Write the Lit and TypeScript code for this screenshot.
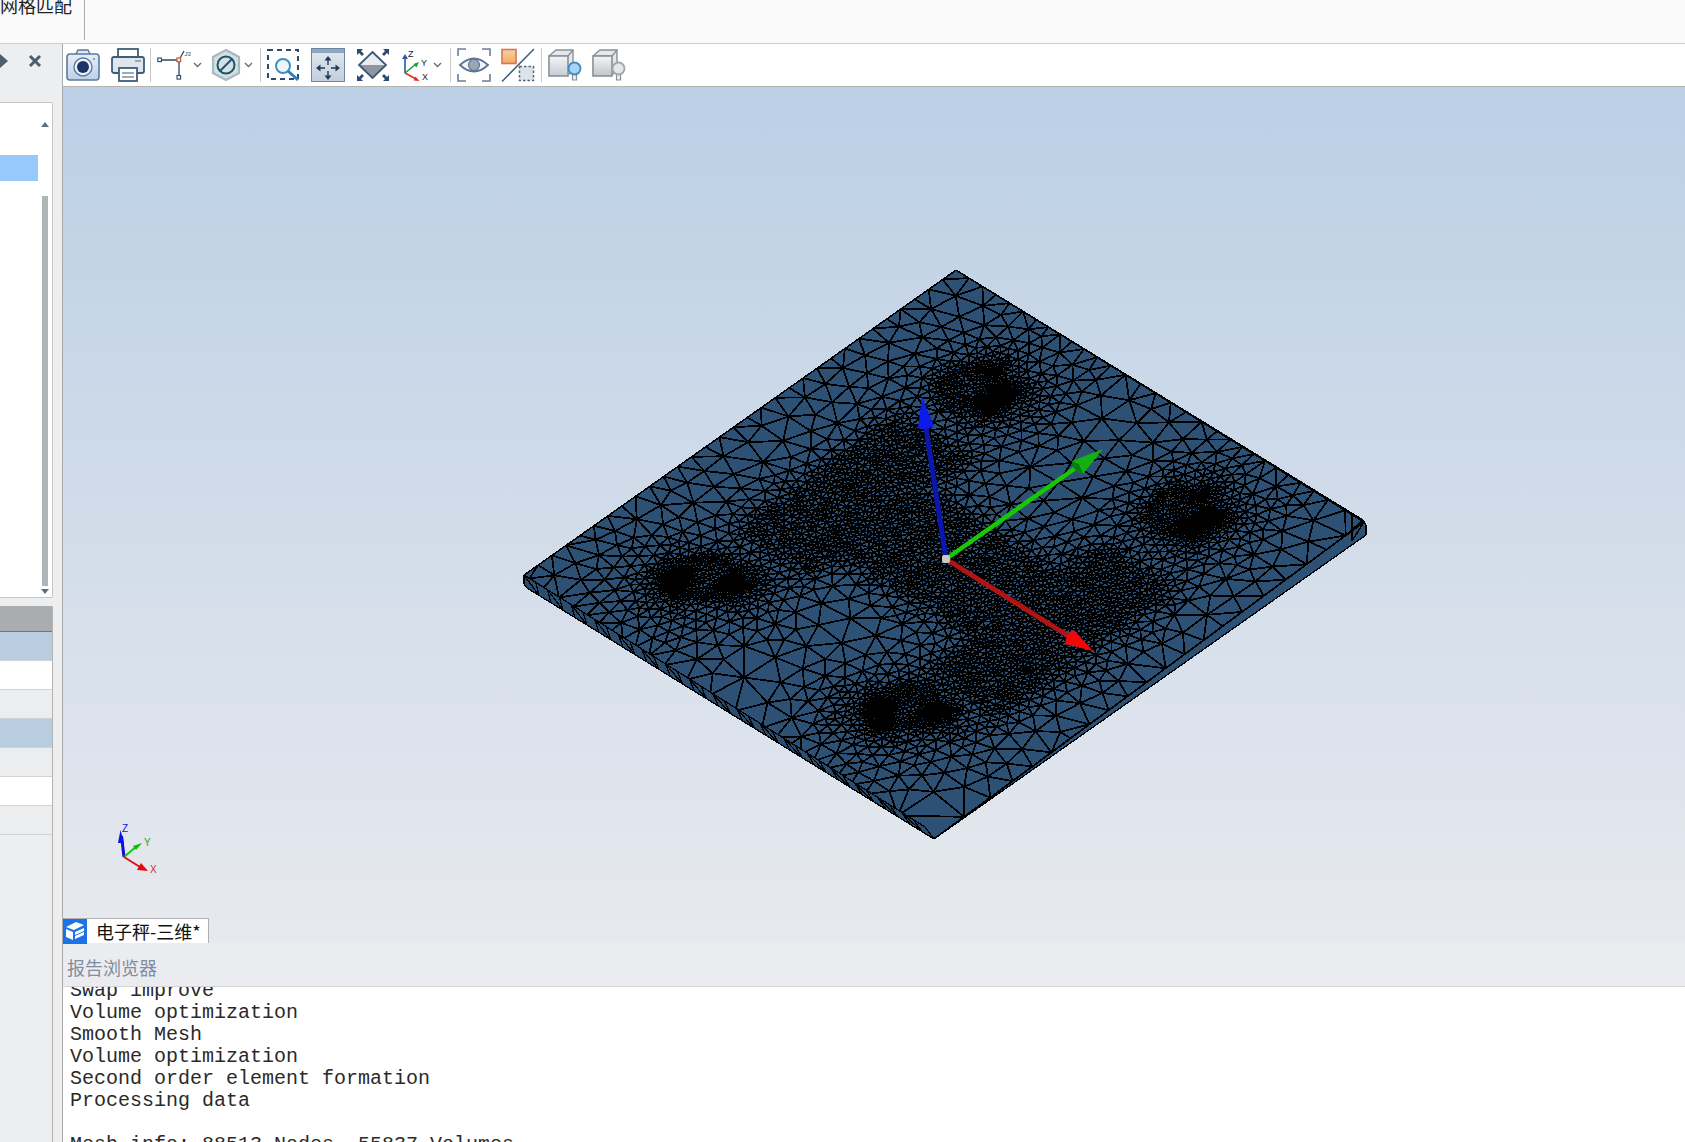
import { LitElement, html, css, svg } from "lit";
import { customElement } from "lit/decorators.js";

type Pt = [number, number];

// plate corners in page pixels (T top, R right, F front, L left)
const T: Pt = [956, 270];
const R: Pt = [1364, 522];
const F: Pt = [934, 839];
const L: Pt = [524, 575];
const SIZE = 500;

let seed = 20240611;
const rnd = () => {
  seed = (seed * 1664525 + 1013904223) >>> 0;
  return seed / 4294967296;
};

const toScreen = (x: number, y: number): Pt => {
  const u = x / SIZE;
  const v = y / SIZE;
  return [
    (1 - u) * (1 - v) * T[0] + u * (1 - v) * R[0] + u * v * F[0] + (1 - u) * v * L[0],
    (1 - u) * (1 - v) * T[1] + u * (1 - v) * R[1] + u * v * F[1] + (1 - u) * v * L[1],
  ];
};

// four mounting bosses: ring centre plus the darkest spots [u, v, radius px]
const bosses = [
  { c: [0.237, 0.185], spots: [[0.287, 0.195, 9], [0.29, 0.165, 8], [0.237, 0.138, 3]] },
  { c: [0.735, 0.178], spots: [[0.782, 0.19, 9], [0.785, 0.158, 8], [0.735, 0.13, 3]] },
  { c: [0.235, 0.806], spots: [[0.2, 0.835, 9], [0.285, 0.785, 9], [0.225, 0.855, 5]] },
  { c: [0.732, 0.803], spots: [[0.7, 0.84, 9], [0.778, 0.785, 9], [0.725, 0.858, 5]] },
].map((b) => ({
  c: [b.c[0] * SIZE, b.c[1] * SIZE],
  spots: b.spots.map((s) => [s[0] * SIZE, s[1] * SIZE, s[2]]),
}));

// fine mesh follows an H: two legs and a crossbar
const bars = [
  [0.2, 0.36, 0.32, 0.68],
  [0.7, 0.86, 0.32, 0.72],
  [0.26, 0.84, 0.42, 0.61],
].map((b) => b.map((n) => n * SIZE));

const sizeAt = (x: number, y: number) => {
  const u = x / SIZE;
  const v = y / SIZE;
  let h = 19 + 33 * u * v + 6 * Math.max(0, u - v);
  for (const b of bars) {
    const dx = Math.max(b[0] - x, 0, x - b[1]);
    const dy = Math.max(b[2] - y, 0, y - b[3]);
    h = Math.min(h, 5 + 0.3 * Math.hypot(dx, dy));
  }
  for (const b of bosses) {
    const d = Math.hypot(x - b.c[0], y - b.c[1]);
    if (d > 120) continue;
    const ring = d < 26 ? 3.7 + 0.05 * (26 - d) : 3.7 + 0.3 * (d - 26);
    h = Math.min(h, ring);
    for (const s of b.spots) {
      const ds = Math.hypot(x - s[0], y - s[1]);
      h = Math.min(h, 2.3 + 0.22 * Math.max(0, ds - s[2]));
    }
  }
  return h;
};

const buildPoints = (): Pt[] => {
  const pts: Pt[] = [];
  const cell = 8;
  const grid = new Map<number, Pt[]>();
  const key = (cx: number, cy: number) => (cx + 10) * 1000 + cy + 10;
  const add = (p: Pt) => {
    pts.push(p);
    const k = key(Math.floor(p[0] / cell), Math.floor(p[1] / cell));
    const list = grid.get(k);
    if (list) list.push(p);
    else grid.set(k, [p]);
  };
  const free = (x: number, y: number, r: number) => {
    const cr = Math.ceil(r / cell);
    const cx = Math.floor(x / cell);
    const cy = Math.floor(y / cell);
    for (let i = cx - cr; i <= cx + cr; i++) {
      for (let j = cy - cr; j <= cy + cr; j++) {
        const list = grid.get(key(i, j));
        if (!list) continue;
        for (const p of list) {
          if ((p[0] - x) ** 2 + (p[1] - y) ** 2 < r * r) return false;
        }
      }
    }
    return true;
  };

  // border first, so the outline stays straight
  const walk = (fn: (t: number) => Pt) => {
    let t = 0;
    while (t < SIZE) {
      const p = fn(t);
      add(p);
      t += sizeAt(p[0], p[1]) * 0.85;
    }
  };
  walk((t) => [t, 0]);
  walk((t) => [SIZE, t]);
  walk((t) => [SIZE - t, SIZE]);
  walk((t) => [0, SIZE - t]);

  const tryAt = (x: number, y: number) => {
    if (x < 3 || y < 3 || x > SIZE - 3 || y > SIZE - 3) return;
    const h = sizeAt(x, y);
    if (free(x, y, h * 0.88)) add([x, y]);
  };
  for (let i = 0; i < 70000; i++) tryAt(rnd() * SIZE, rnd() * SIZE);
  for (const b of bosses) {
    for (let i = 0; i < 26000; i++) {
      tryAt(b.c[0] + (rnd() - 0.5) * 120, b.c[1] + (rnd() - 0.5) * 120);
    }
  }
  for (let i = 0; i < 120000; i++) tryAt(rnd() * SIZE, rnd() * SIZE);
  return pts;
};

// sweep version of Bowyer-Watson, returns triangle index triples
const delaunay = (pts: Pt[]): number[][] => {
  const n = pts.length;
  const all: Pt[] = pts.map((p) => [p[0] + rnd() * 1e-3, p[1] + rnd() * 1e-3]);
  all.push([-5000, -5000], [SIZE / 2, 12000], [6000, -5000]);
  const order = pts.map((_, i) => i).sort((a, b) => all[a][0] - all[b][0]);
  const circ = (a: number, b: number, c: number) => {
    const [ax, ay] = all[a];
    const [bx, by] = all[b];
    const [cx, cy] = all[c];
    const d = 2 * (ax * (by - cy) + bx * (cy - ay) + cx * (ay - by));
    const aa = ax * ax + ay * ay;
    const bb = bx * bx + by * by;
    const cc = cx * cx + cy * cy;
    const x = (aa * (by - cy) + bb * (cy - ay) + cc * (ay - by)) / d;
    const y = (aa * (cx - bx) + bb * (ax - cx) + cc * (bx - ax)) / d;
    return { a, b, c, x, y, r: (ax - x) ** 2 + (ay - y) ** 2 };
  };
  let open = [circ(n, n + 1, n + 2)];
  const closed: (typeof open)[0][] = [];
  for (const i of order) {
    const [px, py] = all[i];
    const edges = new Map<string, [number, number]>();
    const toggle = (a: number, b: number) => {
      const k = a < b ? `${a}_${b}` : `${b}_${a}`;
      if (edges.has(k)) edges.delete(k);
      else edges.set(k, [a, b]);
    };
    const next: typeof open = [];
    for (const t of open) {
      const dx = px - t.x;
      if (dx > 0 && dx * dx > t.r) {
        closed.push(t);
        continue;
      }
      if (dx * dx + (py - t.y) ** 2 > t.r) {
        next.push(t);
        continue;
      }
      toggle(t.a, t.b);
      toggle(t.b, t.c);
      toggle(t.c, t.a);
    }
    for (const [a, b] of edges.values()) next.push(circ(a, b, i));
    open = next;
  }
  return closed
    .concat(open)
    .filter((t) => t.a < n && t.b < n && t.c < n)
    .map((t) => [t.a, t.b, t.c]);
};

const edgesOf = (tris: number[][]) => {
  const seen = new Set<number>();
  const out: [number, number][] = [];
  for (const t of tris) {
    for (let i = 0; i < 3; i++) {
      const a = Math.min(t[i], t[(i + 1) % 3]);
      const b = Math.max(t[i], t[(i + 1) % 3]);
      const k = a * 100000 + b;
      if (!seen.has(k)) {
        seen.add(k);
        out.push([a, b]);
      }
    }
  }
  return out;
};

const buildMesh = () => {
  const pts = buildPoints();
  let edges = edgesOf(delaunay(pts));
  // a little smoothing makes the triangles look like a mesher's
  for (let pass = 0; pass < 3; pass++) {
    const sum = pts.map(() => [0, 0, 0]);
    for (const [a, b] of edges) {
      sum[a][0] += pts[b][0];
      sum[a][1] += pts[b][1];
      sum[a][2]++;
      sum[b][0] += pts[a][0];
      sum[b][1] += pts[a][1];
      sum[b][2]++;
    }
    pts.forEach((p, i) => {
      if (p[0] <= 0 || p[1] <= 0 || p[0] >= SIZE || p[1] >= SIZE) return;
      p[0] += (sum[i][0] / sum[i][2] - p[0]) * 0.6;
      p[1] += (sum[i][1] / sum[i][2] - p[1]) * 0.6;
    });
    edges = edgesOf(delaunay(pts));
  }
  const scr = pts.map((p) => toScreen(p[0], p[1]));
  const f = (n: number) => n.toFixed(1);
  return edges
    .map(([a, b]) => `M${f(scr[a][0])} ${f(scr[a][1])}L${f(scr[b][0])} ${f(scr[b][1])}`)
    .join("");
};

// side wall along the L-F edge, plain quads with one diagonal
const buildWall = () => {
  const topA: Pt = [524, 575];
  const topB: Pt = [925, 827];
  const botA: Pt = [527, 588];
  const botB: Pt = [934, 839];
  const count = 34;
  let d = `M${topA}L${topB}`;
  let prev: Pt = topA;
  for (let i = 1; i <= count; i++) {
    const t = i / count;
    const a: Pt = [topA[0] + (topB[0] - topA[0]) * t, topA[1] + (topB[1] - topA[1]) * t];
    const b: Pt = [botA[0] + (botB[0] - botA[0]) * t, botA[1] + (botB[1] - botA[1]) * t];
    d += `M${a[0].toFixed(1)} ${a[1].toFixed(1)}L${b[0].toFixed(1)} ${b[1].toFixed(1)}`;
    if (i % 2) d += `M${prev[0].toFixed(1)} ${prev[1].toFixed(1)}L${b[0].toFixed(1)} ${b[1].toFixed(1)}`;
    prev = a;
  }
  return d;
};

const meshPath = buildMesh();
const wallPath = buildWall();

const chevron = html`<svg class="chev" width="9" height="34" viewBox="0 0 9 34">
  <path d="M1 15l3.5 3.5L8 15" fill="none" stroke="#5f6f7f" stroke-width="1.4" />
</svg>`;

const cube = (id: string, face: string, edge: string, bulb: string, bulbEdge: string) => svg`
  <defs>
    <linearGradient id=${id} x1="0" y1="0" x2="0" y2="1">
      <stop offset="0" stop-color="#f4f5f7" />
      <stop offset="1" stop-color=${face} />
    </linearGradient>
  </defs>
  <path d="M1 8l7-6h17v20l-5 5" fill="#e4e7eb" stroke=${edge} stroke-width="1.4" />
  <path d="M1 8h19l5-6" fill="none" stroke=${edge} stroke-width="1.4" />
  <rect x="1" y="8" width="19" height="20" fill="url(#${id})" stroke=${edge} stroke-width="1.6" />
  <path d="M24.5 26h4v6h-4z" fill="#f0f0f0" stroke="#8b8f94" stroke-width="1.2" />
  <circle cx="26.5" cy="20.5" r="6" fill=${bulb} stroke=${bulbEdge} stroke-width="1.8" />
`;

@customElement("app-root")
export class AppRoot extends LitElement {
  static styles = css`
    :host {
      display: block;
      width: 1685px;
      height: 1142px;
      overflow: hidden;
      font-family: "Noto Sans CJK SC", "Liberation Sans", sans-serif;
      background: #eceef0;
    }
    .top {
      height: 43px;
      background: #fafafa;
      border-bottom: 1px solid #cfcfcf;
      overflow: hidden;
    }
    .top-tab {
      width: 84px;
      height: 40px;
      border-right: 1px solid #a9a9a9;
      font-size: 18px;
      line-height: 24px;
      color: #222;
      overflow: hidden;
    }
    .top-tab span {
      display: block;
      margin-top: -7px;
    }
    .body {
      display: flex;
      height: 1098px;
    }
    .left {
      width: 63px;
      flex: none;
      box-sizing: border-box;
      border-right: 1px solid #a8a8a8;
      display: flex;
      flex-direction: column;
    }
    .left-head {
      height: 42px;
      flex: none;
    }
    .list {
      width: 53px;
      height: 496px;
      margin-top: 16px;
      box-sizing: border-box;
      flex: none;
      background: #fff;
      border: 1px solid #c6c6c6;
      border-left: none;
      border-radius: 0 2px 2px 0;
      display: flex;
    }
    .list-rows {
      width: 38px;
      padding-top: 52px;
      flex: none;
    }
    .sel {
      height: 26px;
      background: #98c9fd;
    }
    .scroll {
      margin-left: 3px;
      width: 8px;
      display: flex;
      flex-direction: column;
      align-items: center;
    }
    .up {
      margin-top: 19px;
      width: 0;
      height: 0;
      border-left: 4px solid transparent;
      border-right: 4px solid transparent;
      border-bottom: 5px solid #5a7080;
    }
    .thumb {
      margin-top: 69px;
      width: 6px;
      height: 390px;
      background: #b0b5b8;
    }
    .down {
      margin-top: 3px;
      width: 0;
      height: 0;
      border-left: 4px solid transparent;
      border-right: 4px solid transparent;
      border-top: 5px solid #5a7080;
    }
    .table {
      margin-top: 8px;
      width: 53px;
      flex: 1;
      box-sizing: border-box;
      border-right: 1px solid #b4b4b4;
    }
    .thead {
      height: 25px;
      background: #a9adb0;
      border-bottom: 1px solid #70757a;
    }
    .row {
      height: 28px;
      border-bottom: 1px solid #d2d2d2;
    }
    .row.blue {
      background: #b9cde0;
    }
    .row.white {
      background: #fff;
    }
    .row.grey {
      background: #ecedef;
    }
    .main {
      flex: 1;
      min-width: 0;
      display: flex;
      flex-direction: column;
    }
    .bar {
      height: 42px;
      flex: none;
      background: #fff;
      border-bottom: 1px solid #b4b4b4;
      display: flex;
      align-items: center;
      padding-left: 3px;
    }
    .bar svg {
      flex: none;
      display: block;
      overflow: visible;
    }
    .sep {
      width: 1px;
      height: 34px;
      background: #c8c8c8;
      flex: none;
    }
    .m2 { margin-left: 2px; }
    .m4 { margin-left: 4px; }
    .m5 { margin-left: 5px; }
    .m6 { margin-left: 6px; }
    .m7 { margin-left: 7px; }
    .m8 { margin-left: 8px; }
    .m10 { margin-left: 10px; }
    .m11 { margin-left: 11px; }
    .view {
      height: 856px;
      flex: none;
      position: relative;
      background: linear-gradient(#bbcfe5, #e7e9ee);
      display: flex;
      flex-direction: column;
      justify-content: flex-end;
      align-items: flex-start;
    }
    .scene {
      position: absolute;
      left: 0;
      top: 0;
    }
    .tab {
      position: relative;
      height: 24px;
      display: flex;
      align-items: center;
      background: #fff;
      border: 1px solid #b0b0b0;
      border-left: none;
      border-bottom: none;
      font-size: 18px;
      color: #111;
      padding-right: 7px;
    }
    .tab-icon {
      display: block;
      width: 24px;
      height: 25px;
      margin-right: 9px;
    }
    .report {
      height: 43px;
      flex: none;
      box-sizing: border-box;
      background: #ebecef;
      padding: 12px 0 0 4px;
      font-size: 18px;
      line-height: 24px;
      color: #7f8da0;
    }
    .console {
      height: 156px;
      flex: none;
      box-sizing: border-box;
      overflow: hidden;
      background: #fff;
      border-top: 1px solid #d4d4d4;
      border-radius: 2px 0 0 0;
      padding-left: 7px;
      font-family: "Liberation Mono", "Courier New", monospace;
      font-size: 20px;
      line-height: 22px;
      color: #2a2a2a;
      white-space: pre;
    }
    .console div {
      margin-top: -7px;
    }
  `;

  private scene() {
    return html`<svg class="scene" width="1622" height="856" viewBox="63 87 1622 856">
      <defs>
        <clipPath id="outline">
          <path d="M956 270L1363 520L1366 525L1366 535L934 839L527 588L524 584L524 575Z" />
        </clipPath>
      </defs>
      <path d="M956 270L1363 520L1366 525L1366 535L934 839L527 588L524 584L524 575Z" fill="#2c5175" />
      <g clip-path="url(#outline)" fill="none" stroke="#000" shape-rendering="crispEdges">
        <path d=${meshPath} stroke-width="1.8" />
        <path d="M1364 522L1352 541M1352 513L1352 541" stroke-width="1.5" />
      </g>
      <path d="M524 575L925 827L934 839L527 588L524 584Z" fill="#2a4c6e" />
      <path d=${wallPath} fill="none" stroke="#000" stroke-width="1.3" shape-rendering="crispEdges" />
      <path d="M956 270L1363 520L1366 525L1366 535L934 839L527 588L524 584L524 575Z" fill="none" stroke="#000" stroke-width="1.3" shape-rendering="crispEdges" />

      <path d="M946 559L926 428" stroke="#0b16ad" stroke-width="5" />
      <path d="M922 397L934 426Q926 431 918 428Z" fill="#0a1bea" />
      <path d="M946 559L1077 467" stroke="#18c800" stroke-width="4.5" />
      <path d="M1103 449L1083 474Q1072 471 1072 461Z" fill="#12b010" />
      <path d="M1083 474Q1072 471 1072 461L1079 464Z" fill="#0a7d12" />
      <path d="M946 559L1070 637" stroke="#b01414" stroke-width="5" />
      <path d="M1093 651L1065 644Q1066 632 1074 630Z" fill="#f00808" />
      <rect x="942" y="555" width="8" height="8" rx="2" fill="#c8c8c8" />

      <path d="M124 857L121.5 836" stroke="#0a10d8" stroke-width="3" />
      <path d="M120.5 830L124 843L118 843Z" fill="#0a10e8" />
      <path d="M124 857L137 846" stroke="#10c810" stroke-width="2" />
      <path d="M142 843L136 850L133 846Z" fill="#0cb80c" />
      <path d="M124 857L140 867" stroke="#e01010" stroke-width="2" />
      <path d="M148 871L137 870L141 863Z" fill="#e80808" />
      <text x="122" y="832" font-family="Liberation Sans" font-size="10" fill="#1414e0">Z</text>
      <text x="144" y="846" font-family="Liberation Sans" font-size="10" fill="#28a828">Y</text>
      <text x="150" y="873" font-family="Liberation Sans" font-size="10" fill="#c83030">X</text>
    </svg>`;
  }

  private toolbar() {
    return html`<div class="bar">
      <svg width="34" height="34" viewBox="0 0 34 34">
        <defs>
          <linearGradient id="cam" x1="0" y1="0" x2="0" y2="1">
            <stop offset="0" stop-color="#e6eef8" />
            <stop offset="1" stop-color="#bcd0e8" />
          </linearGradient>
        </defs>
        <path d="M10 6l2-4h10l2 4" fill="#dfe8f2" stroke="#5b7a9d" stroke-width="1.5" />
        <rect x="1" y="6" width="32" height="26" rx="3" fill="url(#cam)" stroke="#5b7a9d" stroke-width="1.6" />
        <circle cx="17" cy="19" r="9" fill="#eef3f9" stroke="#5b7a9d" stroke-width="1.4" />
        <circle cx="17" cy="19" r="6" fill="#1c3566" />
        <circle cx="28" cy="11" r="1" fill="#6d88a6" />
      </svg>
      <svg class="m11" width="34" height="34" viewBox="0 0 34 34">
        <rect x="7" y="1" width="20" height="10" fill="#fff" stroke="#3f5c7a" stroke-width="1.8" />
        <rect x="1" y="9" width="32" height="16" rx="2" fill="#dfe5ec" stroke="#3f5c7a" stroke-width="1.8" />
        <rect x="8" y="20" width="18" height="13" fill="#fff" stroke="#3f5c7a" stroke-width="1.8" />
        <path d="M11 25h12M11 29h12" stroke="#7a8ea3" stroke-width="1.4" />
        <path d="M24 13h6" stroke="#8b99a8" stroke-width="1.6" />
      </svg>
      <div class="sep m5"></div>
      <svg class="m6" width="34" height="34" viewBox="0 0 34 34">
        <path d="M4 12H22V28M22 12L27 3" fill="none" stroke="#2c4a66" stroke-width="1.3" />
        <rect x="0.8" y="10" width="3.6" height="3.6" fill="#fff" stroke="#2c4a66" stroke-width="1.1" />
        <rect x="20" y="10" width="3.6" height="3.6" fill="#fff" stroke="#c9602a" stroke-width="1.3" />
        <rect x="20" y="27.5" width="3.6" height="3.6" fill="#fff" stroke="#2c4a66" stroke-width="1.1" />
        <text x="27.5" y="8" font-family="Liberation Sans" font-size="6" fill="#2c4a66">J3</text>
      </svg>
      <div class="m2">${chevron}</div>
      <svg class="m10" width="28" height="34" viewBox="0 0 28 34">
        <polygon points="14,2 27,9 27,25 14,32 1,25 1,9" fill="#d6e0e4" stroke="#a7bac2" stroke-width="2.2" />
        <circle cx="14" cy="17" r="8.5" fill="none" stroke="#17566b" stroke-width="2" />
        <path d="M8 23L20 11" stroke="#17566b" stroke-width="2" />
      </svg>
      <div class="m4">${chevron}</div>
      <div class="sep m7"></div>
      <svg class="m6" width="33" height="34" viewBox="0 0 33 34">
        <rect x="1" y="2" width="30" height="29" fill="none" stroke="#2e4a6e" stroke-width="2" stroke-dasharray="5 4" />
        <circle cx="16" cy="18" r="7" fill="#eef5fb" stroke="#3f8fc6" stroke-width="2" />
        <path d="M21 23L31 32" stroke="#2f7fb8" stroke-width="3" />
      </svg>
      <svg class="m11" width="34" height="34" viewBox="0 0 34 34">
        <defs>
          <linearGradient id="pan" x1="0" y1="0" x2="0" y2="1">
            <stop offset="0" stop-color="#e2e8ef" />
            <stop offset="1" stop-color="#c3cedb" />
          </linearGradient>
        </defs>
        <rect x="0.5" y="0.5" width="33" height="33" fill="url(#pan)" stroke="#6a87a5" />
        <rect x="1" y="1" width="32" height="4" fill="#8ea8c2" />
        <path d="M17 12V28M9 20H25" stroke="#1f3a5f" stroke-width="1.4" stroke-dasharray="5 6 5" />
        <path d="M17 8l3.5 4.5h-7zM17 32l3.5-4.5h-7zM5 20l4.5-3.5v7zM29 20l-4.5-3.5v7z" fill="#1f3a5f" />
      </svg>
      <svg class="m11" width="34" height="34" viewBox="0 0 34 34">
        <polygon points="16.5,4 30,17 3,17" fill="#e9ecf0" />
        <polygon points="3,17 30,17 16.5,30" fill="#8f96a0" />
        <polygon points="16.5,4 30,17 16.5,30 3,17" fill="none" stroke="#3e5874" stroke-width="1.8" />
        <path d="M1 1h6l-2 2 3 3-2 2-3-3-2 2zM33 1v6l-2-2-3 3-2-2 3-3-2-2zM1 33v-6l2 2 3-3 2 2-3 3 2 2zM33 33h-6l2-2-3-3 2-2 3 3 2-2z" fill="#2d4c70" />
      </svg>
      <svg class="m11" width="30" height="34" viewBox="0 0 30 34">
        <path d="M4 25V10" stroke="#2b55b0" stroke-width="1.6" />
        <path d="M4 6l3 5H1z" fill="#2b55b0" />
        <path d="M4 25L15 16" stroke="#1e9a4a" stroke-width="1.6" />
        <path d="M18 14l-2.5 5.5-3-3.5z" fill="#1e9a4a" />
        <path d="M4 25L15 31" stroke="#e0302a" stroke-width="1.6" />
        <path d="M18.5 33l-6-.5 2-4z" fill="#e0302a" />
        <text x="7" y="9" font-family="Liberation Sans" font-size="9" fill="#222">Z</text>
        <text x="20" y="18" font-family="Liberation Sans" font-size="9" fill="#222">Y</text>
        <text x="21" y="32" font-family="Liberation Sans" font-size="9" fill="#222">X</text>
      </svg>
      <div class="m2">${chevron}</div>
      <div class="sep m8"></div>
      <svg class="m6" width="34" height="34" viewBox="0 0 34 34">
        <path d="M1 8V1h8M25 1h8v7M33 26v7h-8M9 33H1v-7" fill="none" stroke="#6a7f99" stroke-width="1.6" />
        <path d="M3 17Q17 4 31 17Q17 30 3 17Z" fill="#f4f6f8" stroke="#5c7391" stroke-width="1.8" />
        <circle cx="17" cy="17" r="5.5" fill="#9aa6b4" stroke="#5c7391" stroke-width="1.2" />
      </svg>
      <svg class="m10" width="34" height="34" viewBox="0 0 34 34">
        <defs>
          <linearGradient id="clip" x1="0" y1="0" x2="0" y2="1">
            <stop offset="0" stop-color="#f8d0a4" />
            <stop offset="1" stop-color="#f2a868" />
          </linearGradient>
        </defs>
        <rect x="1" y="1.5" width="14" height="14" fill="url(#clip)" stroke="#cf7b52" stroke-width="1.6" />
        <path d="M1 33.5L33 1" stroke="#3e5d80" stroke-width="1.5" />
        <rect x="18.5" y="18.5" width="14" height="14" fill="#dde3ea" stroke="#52657d" stroke-width="1.5" stroke-dasharray="2.5 2" />
      </svg>
      <div class="sep m6"></div>
      <svg class="m6" width="34" height="34" viewBox="0 0 34 34">
        ${cube("cubeA", "#c6ccd4", "#8a9198", "#a8d4f4", "#3f8bc2")}
      </svg>
      <svg class="m10" width="34" height="34" viewBox="0 0 34 34">
        ${cube("cubeB", "#c2c5c9", "#8c8f93", "#e6e7e8", "#a4a7aa")}
      </svg>
    </div>`;
  }

  render() {
    return html`
      <div class="top">
        <div class="top-tab"><span>网格匹配</span></div>
      </div>
      <div class="body">
        <div class="left">
          <div class="left-head">
            <svg width="62" height="42" viewBox="0 0 62 42">
              <path d="M0 10L8 17L0 24Z" fill="#4d5d6d" />
              <path d="M30 12L40 22M40 12L30 22" stroke="#4d5d6d" stroke-width="3" />
            </svg>
          </div>
          <div class="list">
            <div class="list-rows"><div class="sel"></div></div>
            <div class="scroll">
              <div class="up"></div>
              <div class="thumb"></div>
              <div class="down"></div>
            </div>
          </div>
          <div class="table">
            <div class="thead"></div>
            <div class="row blue"></div>
            <div class="row white"></div>
            <div class="row grey"></div>
            <div class="row blue"></div>
            <div class="row grey"></div>
            <div class="row white"></div>
            <div class="row grey"></div>
          </div>
        </div>
        <div class="main">
          ${this.toolbar()}
          <div class="view">
            ${this.scene()}
            <div class="tab">
              <svg class="tab-icon" viewBox="0 0 24 25">
                <rect width="24" height="25" fill="#1c73e6" />
                <path d="M3 8L13 3L21 6L11 11ZM3 10L10 13V21L3 18ZM12 13L21 9V12L12 16ZM12 17L21 13V16L12 20Z" fill="#fff" />
              </svg>
              电子秤-三维*
            </div>
          </div>
          <div class="report">报告浏览器</div>
          <div class="console"><div>Swap improve
Volume optimization
Smooth Mesh
Volume optimization
Second order element formation
Processing data

Mesh info: 88513 Nodes, 55837 Volumes</div></div>
        </div>
      </div>
    `;
  }
}
